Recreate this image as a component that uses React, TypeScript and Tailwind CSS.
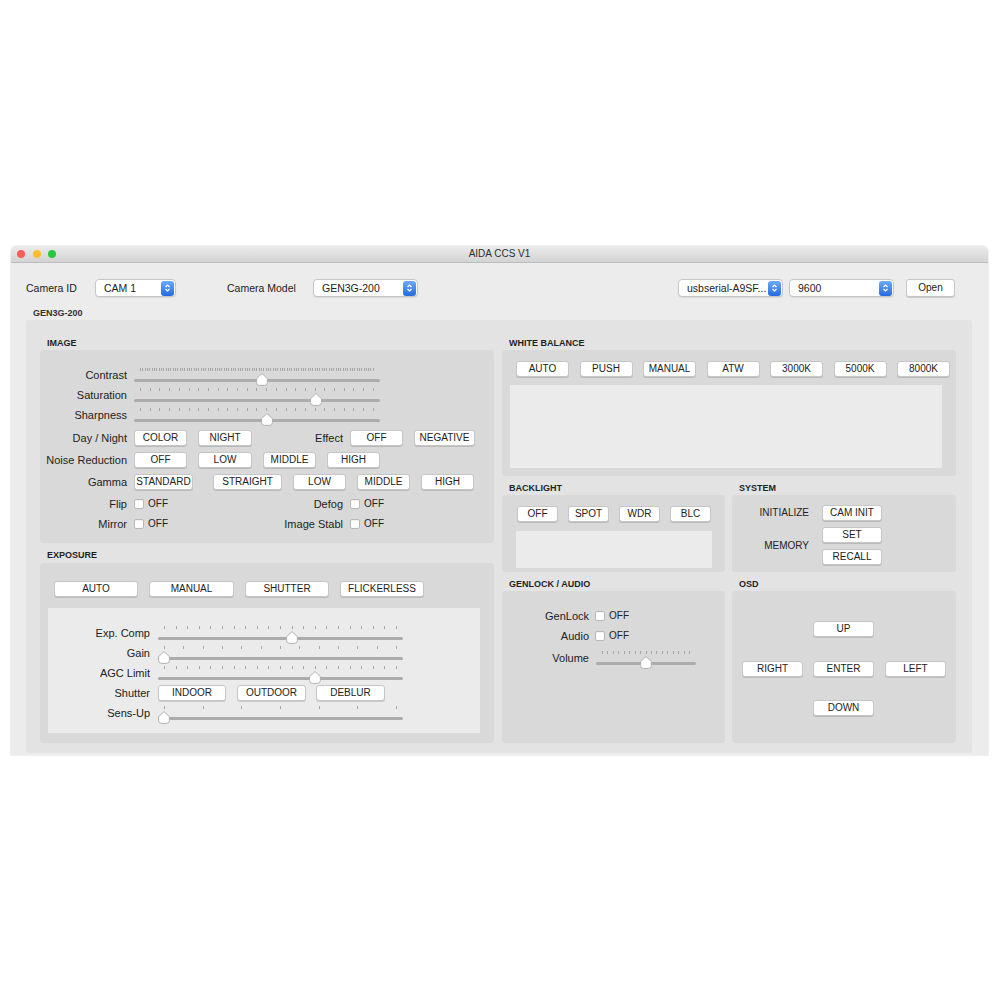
import type { ReactNode } from 'react';

/**
 * AIDA CCS V1 — camera control window
 */

function Btn({ className = '', children }: { className?: string; children: ReactNode }) {
  return (
    <div
      className={`flex h-[16px] shrink-0 items-center justify-center rounded-[3px] border border-[#c6c6c6] bg-white text-[10px] leading-none text-[#222] shadow-[0_1px_0_rgba(0,0,0,0.14)] ${className}`}
    >
      {children}
    </div>
  );
}

function Check() {
  return (
    <div className="h-[10px] w-[10px] shrink-0 rounded-[2px] border border-[#b8b8b8] bg-white shadow-[inset_0_1px_0_rgba(0,0,0,0.05)]" />
  );
}

function Slider({ className = '', ticks, value }: { className?: string; ticks: number; value: number }) {
  return (
    <div className={`relative h-[20px] shrink-0 ${className}`}>
      <div className="absolute left-[6px] right-[6px] top-[3px] flex h-[3px] justify-between">
        {Array.from({ length: ticks }).map((_, i) => (
          <div key={i} className="h-full w-px bg-[#a6a6a6]" />
        ))}
      </div>
      <div className="absolute left-0 right-0 top-[14px] h-[3px] rounded-full bg-[#acacac]" />
      <svg
        className="absolute top-[8px]"
        style={{ left: `calc(${value * 100}% - ${value * 12}px)` }}
        width="12"
        height="13"
        viewBox="0 0 12 13"
      >
        <path
          d="M6 0.6 L11.4 5.6 L11.4 9.5 Q11.4 12.4 8.5 12.4 L3.5 12.4 Q0.6 12.4 0.6 9.5 L0.6 5.6 Z"
          fill="#ffffff"
          stroke="#a9a9a9"
          strokeWidth="0.9"
        />
      </svg>
    </div>
  );
}

function Select({ className = '', text }: { className?: string; text: string }) {
  return (
    <div
      className={`flex h-[18px] shrink-0 items-center rounded-[4px] border border-[#c6c6c6] bg-white pl-[8px] shadow-[0_1px_1px_rgba(0,0,0,0.08)] ${className}`}
    >
      <span className="flex-1 truncate text-[10.5px] leading-none text-[#222]">{text}</span>
      <div className="mr-px flex h-[15px] w-[13px] items-center justify-center rounded-[3px] bg-linear-to-b from-[#6eaaf7] to-[#2469e0]">
        <svg width="7" height="10" viewBox="0 0 7 10">
          <path d="M1.5 4 L3.5 2 L5.5 4 M1.5 6 L3.5 8 L5.5 6" fill="none" stroke="#fff" strokeWidth="1.2" />
        </svg>
      </div>
    </div>
  );
}

function SectionLabel({ className = '', children }: { className?: string; children: ReactNode }) {
  return (
    <div className={`pl-[7px] text-[9px] font-bold leading-[13px] text-[#1f1f1f] ${className}`}>{children}</div>
  );
}

function Panel({ className = '', children }: { className?: string; children?: ReactNode }) {
  return <div className={`rounded-[4px] bg-[#d9d9d9] ${className}`}>{children}</div>;
}

const lbl = 'flex shrink-0 justify-end whitespace-nowrap text-[11px] leading-none text-[#222]';

function ImagePanel() {
  const label = `${lbl} w-[79px]`;
  const right = `${lbl} w-[80px]`;
  return (
    <Panel className="h-[193px] pl-[8px] pt-[15px]">
      <div className="flex h-[20px] items-center">
        <span className={label}>Contrast</span>
        <Slider className="ml-[7px] w-[246px]" ticks={101} value={0.52} />
      </div>
      <div className="flex h-[20px] items-center">
        <span className={label}>Saturation</span>
        <Slider className="ml-[7px] w-[246px]" ticks={25} value={0.75} />
      </div>
      <div className="flex h-[20px] items-center">
        <span className={label}>Sharpness</span>
        <Slider className="ml-[7px] w-[246px]" ticks={25} value={0.5417} />
      </div>

      <div className="mt-[5px] flex h-[16px] items-center">
        <span className={label}>Day / Night</span>
        <div className="ml-[7px] flex w-[129px] gap-[11px]">
          <Btn className="w-[53px]">COLOR</Btn>
          <Btn className="w-[54px]">NIGHT</Btn>
        </div>
        <span className={right}>Effect</span>
        <div className="ml-[7px] flex gap-[11px]">
          <Btn className="w-[53px]">OFF</Btn>
          <Btn className="w-[61px]">NEGATIVE</Btn>
        </div>
      </div>

      <div className="mt-[6px] flex h-[16px] items-center">
        <span className={label}>Noise Reduction</span>
        <div className="ml-[7px] flex gap-[11px]">
          <Btn className="w-[53px]">OFF</Btn>
          <Btn className="w-[54px]">LOW</Btn>
          <Btn className="w-[53px]">MIDDLE</Btn>
          <Btn className="w-[53px]">HIGH</Btn>
        </div>
      </div>

      <div className="mt-[6px] flex h-[16px] items-center">
        <span className={label}>Gamma</span>
        <Btn className="ml-[7px] w-[59px]">STANDARD</Btn>
        <Btn className="ml-[20px] w-[69px]">STRAIGHT</Btn>
        <Btn className="ml-[11px] w-[53px]">LOW</Btn>
        <Btn className="ml-[11px] w-[53px]">MIDDLE</Btn>
        <Btn className="ml-[11px] w-[53px]">HIGH</Btn>
      </div>

      <div className="mt-[7px] flex h-[14px] items-center">
        <span className={label}>Flip</span>
        <div className="ml-[7px] flex w-[129px] items-center gap-[4px]">
          <Check />
          <span className="text-[10px] leading-none">OFF</span>
        </div>
        <span className={right}>Defog</span>
        <div className="ml-[7px] flex items-center gap-[4px]">
          <Check />
          <span className="text-[10px] leading-none">OFF</span>
        </div>
      </div>
      <div className="mt-[6px] flex h-[14px] items-center">
        <span className={label}>Mirror</span>
        <div className="ml-[7px] flex w-[129px] items-center gap-[4px]">
          <Check />
          <span className="text-[10px] leading-none">OFF</span>
        </div>
        <span className={right}>Image Stabl</span>
        <div className="ml-[7px] flex items-center gap-[4px]">
          <Check />
          <span className="text-[10px] leading-none">OFF</span>
        </div>
      </div>
    </Panel>
  );
}

function ExposurePanel() {
  const label = `${lbl} w-[102px]`;
  return (
    <Panel className="h-[180px] pl-[8px] pt-[18px]">
      <div className="ml-[6px] flex gap-[11px]">
        <Btn className="w-[84px]">AUTO</Btn>
        <Btn className="w-[85px]">MANUAL</Btn>
        <Btn className="w-[84px]">SHUTTER</Btn>
        <Btn className="w-[84px]">FLICKERLESS</Btn>
      </div>
      <div className="mt-[11px] h-[125px] w-[432px] bg-[#ebebeb] pt-[15px]">
        <div className="flex h-[20px] items-center">
          <span className={label}>Exp. Comp</span>
          <Slider className="ml-[8px] w-[245px]" ticks={21} value={0.55} />
        </div>
        <div className="flex h-[20px] items-center">
          <span className={label}>Gain</span>
          <Slider className="ml-[8px] w-[245px]" ticks={13} value={0} />
        </div>
        <div className="flex h-[20px] items-center">
          <span className={label}>AGC Limit</span>
          <Slider className="ml-[8px] w-[245px]" ticks={21} value={0.65} />
        </div>
        <div className="mt-[2px] flex h-[16px] items-center">
          <span className={label}>Shutter</span>
          <Btn className="ml-[8px] w-[68px]">INDOOR</Btn>
          <Btn className="ml-[11px] w-[69px]">OUTDOOR</Btn>
          <Btn className="ml-[10px] w-[69px]">DEBLUR</Btn>
        </div>
        <div className="mt-[2px] flex h-[20px] items-center">
          <span className={label}>Sens-Up</span>
          <Slider className="ml-[8px] w-[245px]" ticks={7} value={0} />
        </div>
      </div>
    </Panel>
  );
}

function WhiteBalancePanel() {
  return (
    <Panel className="h-[126px] pl-[8px] pt-[11px]">
      <div className="ml-[6px] flex gap-[10.5px]">
        {['AUTO', 'PUSH', 'MANUAL', 'ATW', '3000K', '5000K', '8000K'].map((t) => (
          <Btn key={t} className="w-[53px]">
            {t}
          </Btn>
        ))}
      </div>
      <div className="mt-[8px] h-[83px] w-[432px] bg-[#ebebeb]" />
    </Panel>
  );
}

function BacklightPanel() {
  return (
    <Panel className="h-[77px] pl-[14px] pt-[11px]">
      <div className="ml-px flex gap-[10px]">
        {['OFF', 'SPOT', 'WDR', 'BLC'].map((t) => (
          <Btn key={t} className="w-[41px]">
            {t}
          </Btn>
        ))}
      </div>
      <div className="mt-[9px] h-[37px] w-[196px] bg-[#ebebeb]" />
    </Panel>
  );
}

function SystemPanel() {
  return (
    <Panel className="h-[77px] pt-[10px]">
      <div className="flex h-[16px] items-center">
        <span className="w-[77px] text-right text-[10px] leading-none text-[#222]">INITIALIZE</span>
        <Btn className="ml-[13px] w-[60px]">CAM INIT</Btn>
      </div>
      <div className="mt-[6px] flex items-center">
        <span className="w-[77px] text-right text-[10px] leading-none text-[#222]">MEMORY</span>
        <div className="ml-[13px] flex flex-col gap-[6px]">
          <Btn className="w-[60px]">SET</Btn>
          <Btn className="w-[60px]">RECALL</Btn>
        </div>
      </div>
    </Panel>
  );
}

function GenlockPanel() {
  const label = `${lbl} w-[87px]`;
  return (
    <Panel className="h-[152px] pt-[18px]">
      <div className="flex h-[14px] items-center">
        <span className={label}>GenLock</span>
        <div className="ml-[6px] flex items-center gap-[4px]">
          <Check />
          <span className="text-[10px] leading-none">OFF</span>
        </div>
      </div>
      <div className="mt-[6px] flex h-[14px] items-center">
        <span className={label}>Audio</span>
        <div className="ml-[6px] flex items-center gap-[4px]">
          <Check />
          <span className="text-[10px] leading-none">OFF</span>
        </div>
      </div>
      <div className="mt-[5px] flex h-[20px] items-center">
        <span className={label}>Volume</span>
        <Slider className="ml-[7px] w-[100px]" ticks={17} value={0.5} />
      </div>
    </Panel>
  );
}

function OsdPanel() {
  return (
    <Panel className="h-[152px] pl-[10px] pt-[30px]">
      <div className="flex">
        <Btn className="ml-[71px] w-[61px]">UP</Btn>
      </div>
      <div className="mt-[24px] flex">
        <Btn className="w-[61px]">RIGHT</Btn>
        <Btn className="ml-[10px] w-[61px]">ENTER</Btn>
        <Btn className="ml-[11px] w-[61px]">LEFT</Btn>
      </div>
      <div className="mt-[23px] flex">
        <Btn className="ml-[71px] w-[61px]">DOWN</Btn>
      </div>
    </Panel>
  );
}

export default function App() {
  return (
    <div className="h-[1000px] w-[1000px] bg-white pl-[11px] pt-[246px] font-['Liberation_Sans',Arial,sans-serif] text-[#222]">
      <div className="w-[977px] rounded-t-[5px] shadow-[0_0_0_1px_rgba(0,0,0,0.06)]">
        {/* title bar */}
        <div className="grid h-[17px] grid-cols-[1fr_auto_1fr] items-center rounded-t-[5px] border-b border-[#bdbdbd] bg-linear-to-b from-[#ebebeb] to-[#d3d3d3]">
          <div className="flex items-center gap-[7.5px] pl-[6px]">
            <div className="h-[8px] w-[8px] rounded-full bg-[#fc5f57]" />
            <div className="h-[8px] w-[8px] rounded-full bg-[#fdbc2e]" />
            <div className="h-[8px] w-[8px] rounded-full bg-[#29c840]" />
          </div>
          <div className="text-[10px] leading-none text-[#2e2e2e]">AIDA CCS V1</div>
          <div />
        </div>

        {/* body */}
        <div className="h-[492px] bg-[#ececec] pl-[15px] pt-[16px]">
          <div className="flex items-center pr-[33px]">
            <span className="w-[69px] text-[10.5px] leading-none">Camera ID</span>
            <Select className="w-[81px]" text="CAM 1" />
            <span className="ml-[51px] w-[86px] text-[10.5px] leading-none">Camera Model</span>
            <Select className="w-[105px]" text="GEN3G-200" />
            <div className="flex-1" />
            <Select className="w-[105px]" text="usbserial-A9SF..." />
            <Select className="ml-[6px] w-[105px]" text="9600" />
            <Btn className="ml-[12px] h-[18px] w-[49px] text-[10.5px]">Open</Btn>
          </div>

          <div className="mt-[9px] h-[14px] pl-[7px] text-[9px] font-bold leading-[14px] text-[#333]">GEN3G-200</div>

          <div className="flex h-[433px] w-[946px] gap-[8px] rounded-[3px] bg-[#e3e3e3] pl-[14px] pr-[16px] pt-[17px]">
            {/* left column */}
            <div className="flex w-[454px] flex-col">
              <SectionLabel>IMAGE</SectionLabel>
              <ImagePanel />
              <SectionLabel className="h-[20px] pt-[6px]">EXPOSURE</SectionLabel>
              <ExposurePanel />
            </div>

            {/* right column */}
            <div className="flex w-[454px] flex-col">
              <SectionLabel>WHITE BALANCE</SectionLabel>
              <WhiteBalancePanel />
              <div className="grid grid-cols-[223px_224px] gap-x-[7px]">
                <SectionLabel className="h-[19px] pt-[6px]">BACKLIGHT</SectionLabel>
                <SectionLabel className="h-[19px] pt-[6px]">SYSTEM</SectionLabel>
                <BacklightPanel />
                <SystemPanel />
                <SectionLabel className="h-[19px] pt-[6px]">GENLOCK / AUDIO</SectionLabel>
                <SectionLabel className="h-[19px] pt-[6px]">OSD</SectionLabel>
                <GenlockPanel />
                <OsdPanel />
              </div>
            </div>
          </div>
        </div>
      </div>
    </div>
  );
}
